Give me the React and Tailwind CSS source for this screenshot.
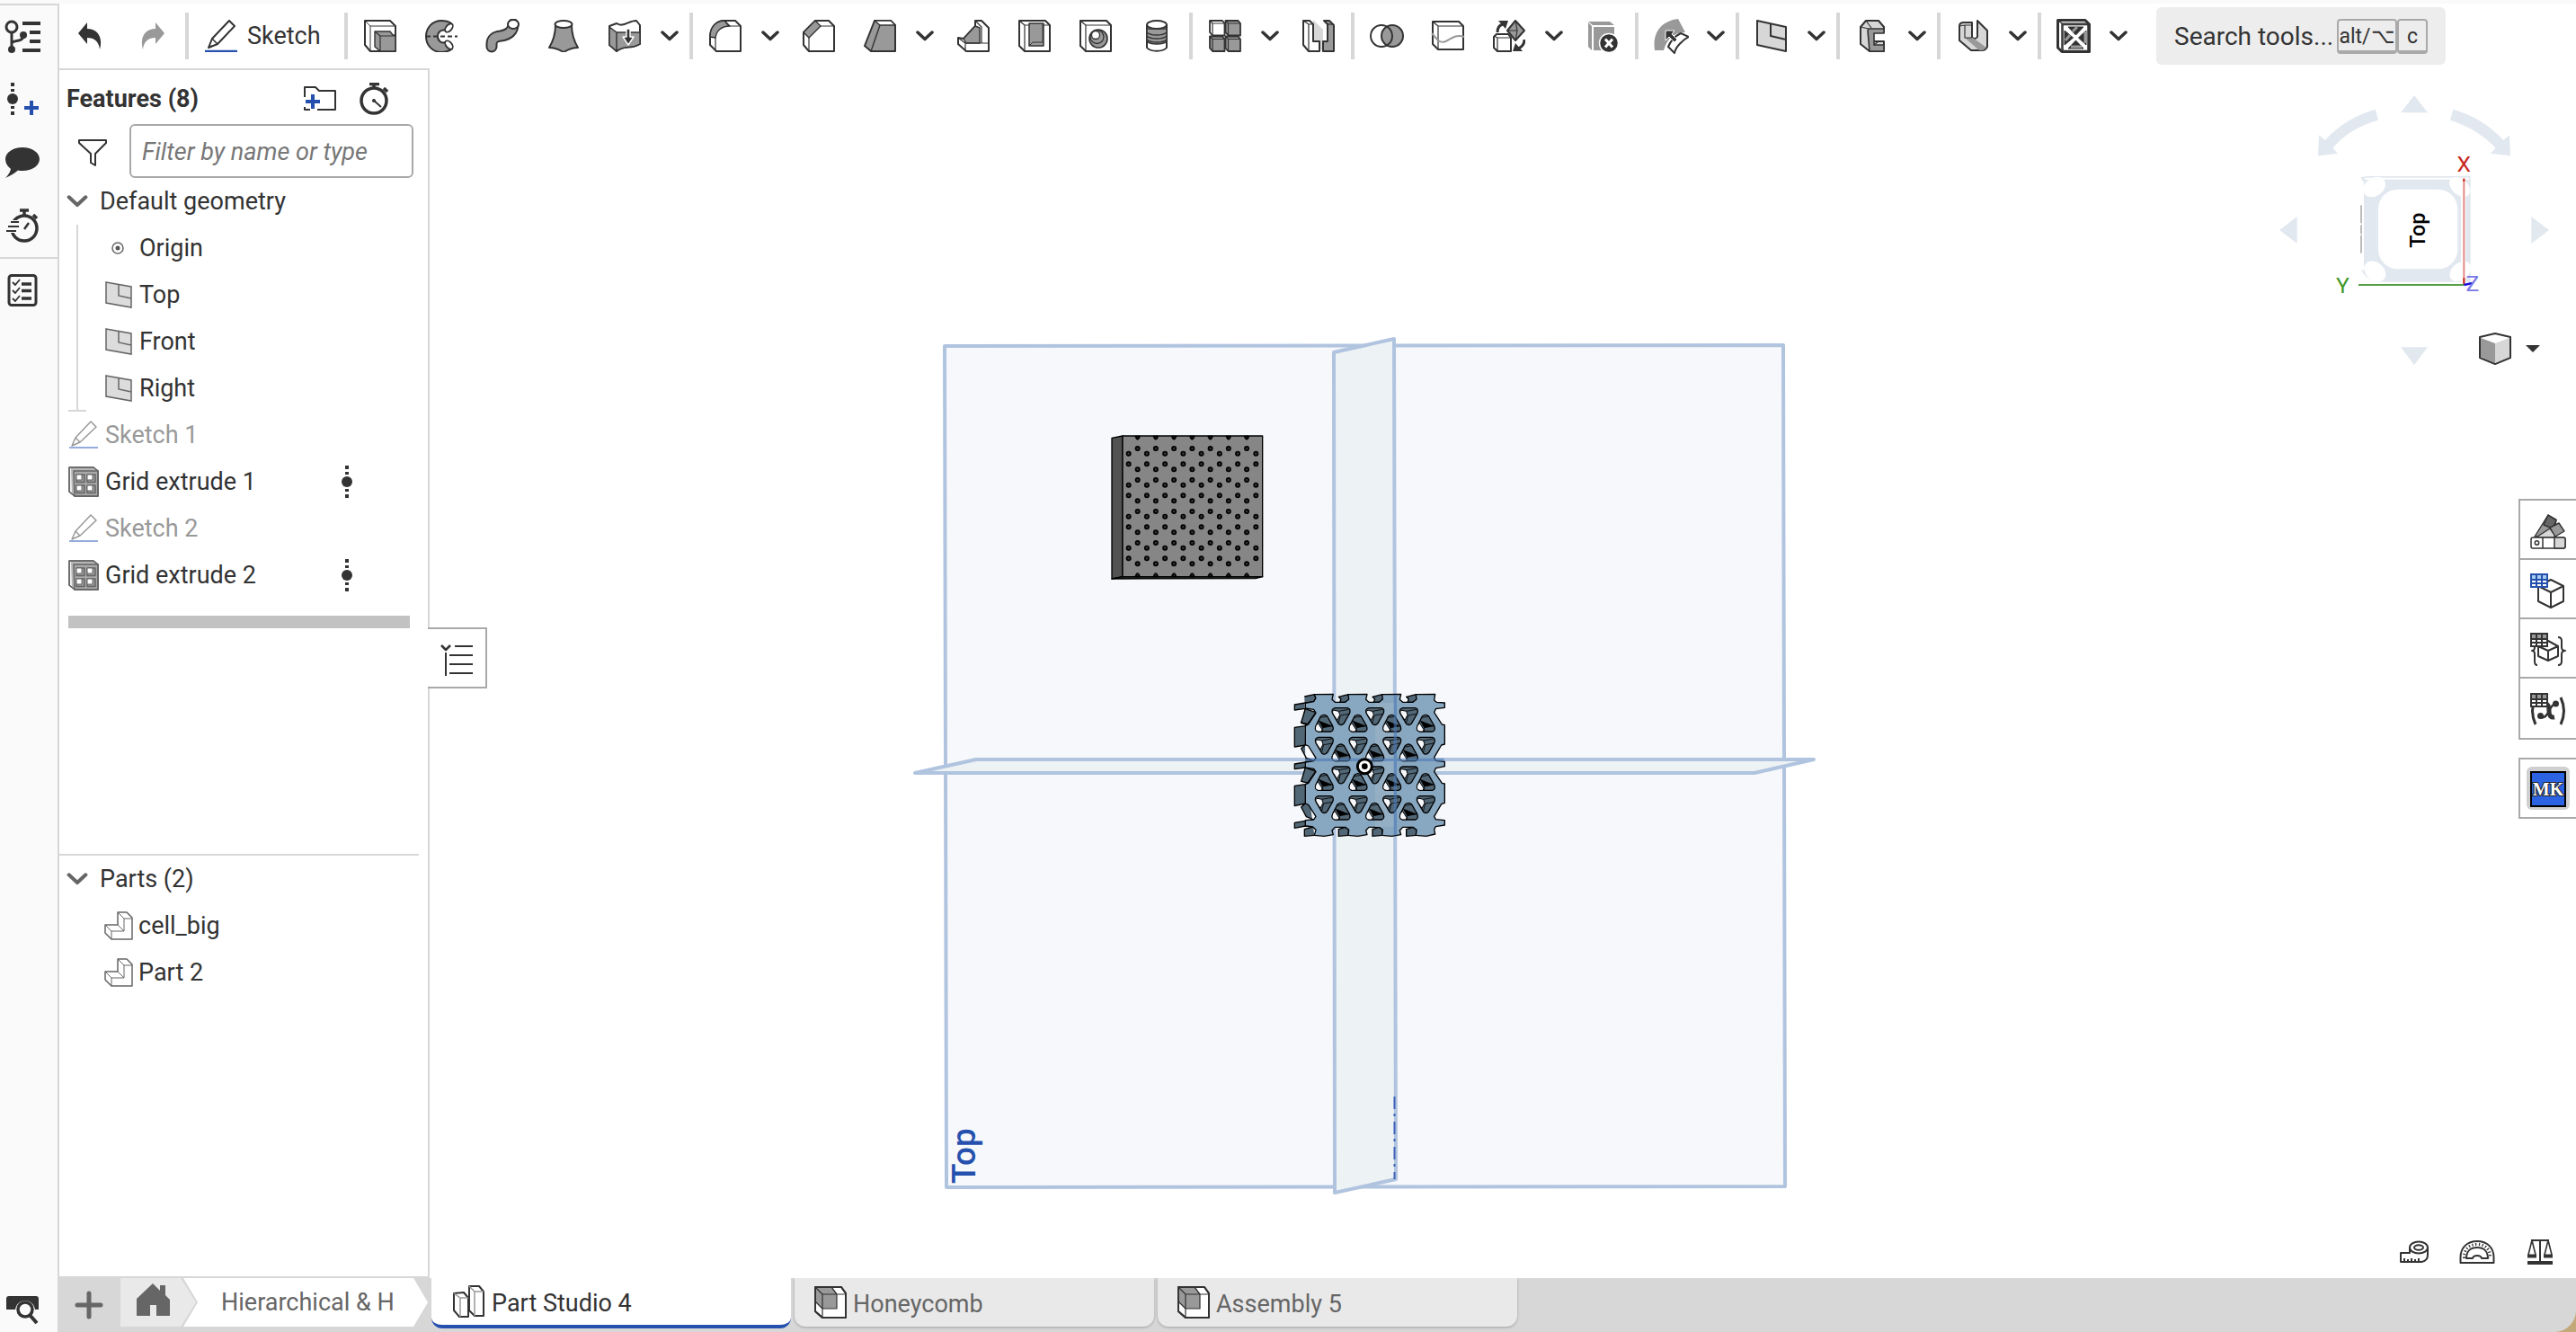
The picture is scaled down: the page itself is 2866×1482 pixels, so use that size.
import React from "react";

const INK = "#333333";
const MID = "#999999";

function Icon({ w = 36, h = 36, children, className = "" }) {
  return (
    <svg
      width={w}
      height={h}
      viewBox={`0 0 ${w} ${h}`}
      fill="none"
      stroke={INK}
      strokeWidth="2"
      strokeLinejoin="round"
      aria-hidden="true"
      className={`shrink-0 ${className}`}
    >
      {children}
    </svg>
  );
}

/* ---------- toolbar icons ---------- */

const Undo = () => (
  <Icon w={28} h={32}>
    <path d="M1 13 11 1V8C22 8 29 17 25 31 24 22 19 18 11 18V25Z" fill={INK} stroke="none" />
  </Icon>
);
const Redo = () => (
  <Icon w={28} h={32}>
    <path d="M27 13 17 1V8C6 8-1 17 3 31 4 22 9 18 17 18V25Z" fill={MID} stroke="none" />
  </Icon>
);
const Pencil = () => (
  <Icon>
    <path d="M27 1 33 7 14 27 4 31 8 21Z" fill="#fff" />
    <path d="M8 21 14 27M4 31 8 29" strokeWidth="1.6" />
    <path d="M0 35H36" stroke="#2650ae" strokeWidth="2.4" />
  </Icon>
);
const Extrude = () => (
  <Icon>
    <path d="M1 1H29L35 7V35H7L1 28Z" fill="#fff" />
    <path d="M1 1 7 7H35M7 7V35" strokeWidth="1" />
    <path d="M12 13H29L32 17H35V35H18L12 30Z" fill={MID} strokeWidth="1.4" />
    <path d="M12 13 18 18H35M18 18V35" strokeWidth="1.2" />
  </Icon>
);
const Revolve = () => (
  <Icon>
    <path d="M29 4C25 1 21 1 18 1 8 1 1 9 1 18.500S8 36 18 36C22 36 27 35 30 32L23 25C18 27 14 23 14 18.500S18 10 23 12Z" fill={MID} />
    <ellipse cx="26.500" cy="9" rx="3.200" ry="5.500" fill="#fff" strokeWidth="1.800" transform="rotate(40 26.500 9)" />
    <ellipse cx="26.500" cy="28" rx="3.200" ry="5.500" fill="#fff" strokeWidth="1.800" transform="rotate(-40 26.500 28)" />
    <path d="M1 18.500H36" strokeDasharray="5 3" />
  </Icon>
);
const Sweep = () => (
  <Icon w={38} h={38}>
    <path d="M7 31V28Q7 20 17 19 30 17 31 7V6" strokeWidth="13" strokeLinecap="round" />
    <path d="M7 31V28Q7 20 17 19 30 17 31 7V6" strokeWidth="9" stroke={MID} strokeLinecap="round" />
    <ellipse cx="31" cy="6" rx="6" ry="5" fill="#fff" />
  </Icon>
);
const Loft = () => (
  <Icon>
    <path d="M9 6C9 16 5 26 2 31 8 31 13 33 18 36 23 33 28 31 34 31 31 26 27 16 27 6Z" fill={MID} />
    <ellipse cx="18" cy="5" rx="9.500" ry="4" fill="#fff" />
  </Icon>
);
const Thicken = () => (
  <Icon>
    <path d="M1 7V28L9 35C18 27 24 34 35 27V6L31 1C22 1 16 9 9 4Z" fill="#fff" />
    <path d="M1 8 9 14V35L1 28ZM9 14H35V27C24 33 18 28 9 35Z" fill={MID} strokeWidth="1.400" />
    <path d="M20 10H24V19H28L22 28 16 19H20Z" fill={INK} stroke="#fff" strokeWidth="1.400" />
  </Icon>
);
const Fillet = () => (
  <Icon>
    <path d="M1 19C1 8 8 1 17 1H29L35 7V35H8L1 28Z" fill="#fff" />
    <path d="M1 19C1 8 8 1 17 1L23 7C14 7 8 12 7 20Z" fill={MID} strokeWidth="1.400" />
    <path d="M17 1 22 7H35M7 20V34" strokeWidth="1.200" />
  </Icon>
);
const Chamfer = () => (
  <Icon>
    <path d="M1 14 14 1H29L35 7V35H7L1 28Z" fill="#fff" />
    <path d="M1 14 14 1 20 7 7 20Z" fill={MID} strokeWidth="1.400" />
    <path d="M20 7H35M7 20V34" strokeWidth="1.200" />
  </Icon>
);
const Draft = () => (
  <Icon>
    <path d="M12 1H30L35 6V35H8L1 29Z" fill={MID} />
    <path d="M12 1H30L35 6H18Z" fill="#fff" strokeWidth="1.400" />
    <path d="M18 6 8 35" strokeWidth="1.400" />
  </Icon>
);
const Rib = () => (
  <Icon>
    <path d="M20 1H27L35 9V35H10L1 27V20L7 21 20 7Z" fill="#fff" />
    <path d="M7 21 20 7 25 9V26H10Z" fill={MID} strokeWidth="1.400" />
    <path d="M20 1 27 8 27 26M1 20 9 26V34M9 26H35" strokeWidth="1.200" />
  </Icon>
);
const Shell = () => (
  <Icon>
    <path d="M1 1H30L35 6V35H7L1 29Z" fill="#fff" />
    <path d="M1 1 7 6H35M7 6V35" strokeWidth="1.200" />
    <path d="M12 4H28V29H12Z" fill={MID} strokeWidth="1.500" />
    <path d="M12 29 16 25H27M27 25V5" strokeWidth="1" />
  </Icon>
);
const Hole = () => (
  <Icon>
    <path d="M1 1H30L35 6V35H7L1 29Z" fill="#fff" />
    <path d="M1 1 7 6H35M7 6V35" strokeWidth="1.200" />
    <circle cx="21" cy="21" r="10" fill={MID} strokeWidth="1.600" />
    <circle cx="19.500" cy="19" r="7.500" fill={MID} strokeWidth="1.300" />
    <circle cx="18" cy="17" r="4.500" fill="#fff" strokeWidth="1.300" />
  </Icon>
);
const Thread = () => (
  <Icon w={26}>
    <path d="M2 6V31C6 36 20 36 24 31V6Z" fill="#fff" />
    <path d="M2 10V24C6 28 20 28 24 24V10Z" fill={MID} strokeWidth="1.400" />
    <path d="M2 14C6 18 20 18 24 14M2 18C6 22 20 22 24 18M2 22C6 26 20 26 24 22" strokeWidth="1.300" />
    <ellipse cx="13" cy="5.500" rx="11" ry="4.500" fill="#fff" />
  </Icon>
);
const Pattern = () => (
  <Icon>
    {[[1, 1, "#fff"], [18.500, 1, MID], [1, 18.500, MID], [18.500, 18.500, MID]].map(([x, y, f]) => (
      <g key={`${x}-${y}`} transform={`translate(${x} ${y})`}>
        <path d="M0 0H14L16.500 3V16.500H3L0 13Z" fill={f} strokeWidth="1.800" />
        <path d="M0 0 3 3H16.500M3 3V16.500" strokeWidth="1.200" />
      </g>
    ))}
  </Icon>
);
const Mirror = () => (
  <Icon>
    <path d="M12 0 23 11V36L12 25Z" fill="#d7d7d7" stroke="none" />
    <path d="M1 1H8L12 5V24H19V35H7L1 28Z" fill="#fff" />
    <path d="M1 1 7 5H12M7 5V35" strokeWidth="1.200" />
    <path d="M24 1H30L35 6V35H23V24H28V5Z" fill={MID} />
    <path d="M28 5H35" strokeWidth="1.200" />
  </Icon>
);
const Boolean = () => (
  <Icon w={38}>
    <circle cx="13" cy="18" r="12" fill="#fff" />
    <circle cx="25" cy="18" r="12" fill={MID} />
    <path d="M19 7.600A12 12 0 0 1 19 28.400" />
  </Icon>
);
const Split = () => (
  <Icon w={38}>
    <path d="M2 2H31L36 7V33H8L2 27Z" fill="#fff" />
    <path d="M2 2 8 7H36M8 7V33" strokeWidth="1.200" />
    <path d="M1 15 8 23C18 30 22 14 37 19" stroke={MID} />
  </Icon>
);
const Transform = () => (
  <Icon>
    <path d="M1 19 4 16H17L20 20V35H5L1 31Z" fill="#fff" />
    <path d="M1 18 5 20H20M5 20V35" strokeWidth="1.200" />
    <path d="M25 1 35 12 25 23 16 12Z" fill={MID} />
    <path d="M25 1 27 12 25 23M16 12 27 12" strokeWidth="1.200" />
    <path d="M5 14C5 9 7 6 11 5M35 22C35 27 33 30 28 32" strokeWidth="3" />
    <path d="M6 1H17L14 10ZM33 35H22L25 26Z" fill={INK} stroke="none" />
  </Icon>
);
const DeletePart = () => (
  <Icon>
    <path d="M2 2H26L31 6H7ZM2 3 6 7V34L2 30ZM8 8H31V34H8Z" fill={MID} stroke="none" />
    <circle cx="25" cy="26" r="10.500" fill={INK} stroke="#fff" strokeWidth="1.500" />
    <path d="M21 21.500 29 30.500M29 21.500 21 30.500" stroke="#fff" strokeWidth="3" />
  </Icon>
);
const ModifyFillet = () => (
  <Icon w={40} h={40}>
    <path d="M2 36C-1 16 10 3 28 1L36 16C24 16 16 22 12 36Z" fill={MID} stroke="none" />
    <path d="M31 17 40 21C34 24 25 32 24 39L17 32C20 25 25 20 31 17Z" fill="#fff" />
    <path d="M14 14H24L21 18 27 24 24 27 18 21 14 25Z" fill={INK} stroke="#fff" strokeWidth="1" />
  </Icon>
);
const Plane = () => (
  <Icon>
    <path d="M2 1 34 8V35L2 28Z" fill="#d7d7d7" />
    <path d="M17 4V18L34 22" />
  </Icon>
);
const Frame = () => (
  <Icon w={30}>
    <path d="M2 8 8 1H22L28 8V14H16V24H28V35H12L2 27Z" fill="#d7d7d7" />
    <path d="M11 10H28V15H17V28H28V35H12L10 12Z" fill={MID} strokeWidth="1.600" />
    <path d="M2 8 11 10M8 1 14 9M17 28 22 24" strokeWidth="1.200" />
  </Icon>
);
const SheetMetal = () => (
  <Icon w={34}>
    <path d="M2 7C2 4 4 3 7 3H16V19Q19 23 22 19V1L33 12V30Q31 34 27 34H15L2 23Z" fill="#d7d7d7" />
    <path d="M8 20H17L32 31 28 34H24Z" fill={MID} stroke="none" />
    <path d="M8 6V20H16M2 7 8 6 16 6" strokeWidth="1.200" />
  </Icon>
);
const GridTool = () => (
  <Icon w={38} h={38}>
    <path d="M1.500 1.500H32L36.500 6V36.500H6L1.500 32Z" fill="#fff" strokeWidth="3" />
    <path d="M1 1 6 5H36M6 5V36" strokeWidth="1.500" />
    <rect x="7" y="6.500" width="28" height="29" fill="#fff" strokeWidth="1.500" />
    <path d="M13 9H30L21.500 18ZM13 33H30L21.500 24Z" fill={INK} strokeWidth="1" />
    <path d="M9 13V29L18.500 21ZM33 13V29L24.500 21Z" fill={INK} strokeWidth="1" />
    <path d="M10 24 15 18M18 14 23 9M32 14V27M16 31H28" stroke={MID} strokeWidth="3" />
    <path d="M10 9 33 33M33 9 10 33" stroke="#fff" strokeWidth="2.500" />
  </Icon>
);

function Chevron({ w = 20, h = 12, color = INK, stroke = 3.5 }) {
  return (
    <svg width={w} height={h} viewBox="0 0 20 12" fill="none" aria-hidden="true" className="shrink-0">
      <path d="M2 2 10 9.500 18 2" stroke={color} strokeWidth={stroke} strokeLinecap="round" strokeLinejoin="round" />
    </svg>
  );
}

const TOOLS = [
  [["Extrude", Extrude], ["Revolve", Revolve], ["Sweep", Sweep], ["Loft", Loft], ["Thicken", Thicken], "v"],
  [["Fillet", Fillet], "v", ["Chamfer", Chamfer], ["Draft", Draft], "v", ["Rib", Rib], ["Shell", Shell], ["Hole", Hole], ["Thread", Thread]],
  [["Pattern", Pattern], "v", ["Mirror", Mirror]],
  [["Boolean", Boolean], ["Split", Split], ["Transform", Transform], "v", ["Delete part", DeletePart]],
  [["Modify fillet", ModifyFillet], "v"],
  [["Plane", Plane], "v"],
  [["Frame", Frame], "v"],
  [["Sheet metal", SheetMetal], "v"],
  [["Grid extrude", GridTool], "v"],
];

const Divider = () => <div className="mx-0.5 h-13 w-1 shrink-0 bg-[#d7d7d7]" />;

function ToolButton({ label, children }) {
  return (
    <button type="button" aria-label={label} className="flex h-15 w-17 shrink-0 items-center justify-center">
      {children}
    </button>
  );
}

function Toolbar() {
  return (
    <header className="flex h-18 shrink-0 items-center bg-white">
      <div className="flex gap-0.5">
        <ToolButton label="Undo"><Undo /></ToolButton>
        <ToolButton label="Redo"><Redo /></ToolButton>
      </div>
      <Divider />
      <button type="button" className="flex h-15 w-[169px] shrink-0 items-center gap-[11px] pl-4">
        <Pencil />
        Sketch
      </button>
      {TOOLS.map((group, g) => (
        <div key={g} className="flex shrink-0 items-center">
          <Divider />
          {group.map((item, i) =>
            item === "v" ? (
              <button key={i} type="button" aria-label="More tools" className="flex h-15 w-9 items-center justify-center pr-1">
                <Chevron />
              </button>
            ) : (
              <ToolButton key={i} label={item[0]}>{React.createElement(item[1])}</ToolButton>
            )
          )}
        </div>
      ))}
      <button type="button" className="ml-5.5 flex h-16 w-[322px] shrink-0 items-center rounded-md bg-[#ededed] pl-5 text-[28px]">
        <span className="w-[181px] pt-0.5 text-left">Search tools...</span>
        <kbd className="h-[39px] w-[67px] rounded border-2 border-b-4 border-[#a9a9a9] text-center font-[Roboto] text-[23px] leading-9">alt/⌥</kbd>
        <kbd className="h-[39px] w-[34px] rounded border-2 border-b-4 border-[#a9a9a9] text-center font-[Roboto] text-[23px] leading-9">c</kbd>
      </button>
    </header>
  );
}

/* ---------- left rail ---------- */

const RailTree = () => (
  <Icon w={40} h={38}>
    <circle cx="8" cy="8" r="6" strokeWidth="3" />
    <path d="M8 14V31M8 26Q9 24 16 23 21 22 21 17" strokeWidth="3" />
    <circle cx="8" cy="33" r="4" fill={INK} stroke="none" />
    <circle cx="21" cy="17" r="4" fill={INK} stroke="none" />
    <path d="M20 4H40M28 14H40M28 24H40M20 34H40" strokeWidth="4" />
  </Icon>
);
const DotsStack = () => (
  <>
    <circle cx="6" cy="18" r="6" fill={INK} stroke="none" />
    <path d="M6 0V4M6 7V10M6 26V29M6 32V36" strokeWidth="4" />
  </>
);
const RailInsert = () => (
  <Icon w={36} h={38}>
    <g transform="translate(1 0)"><DotsStack /></g>
    <path d="M20 28H36M28 20V36" stroke="#2650ae" strokeWidth="4" />
  </Icon>
);
const RailChat = () => (
  <Icon w={40} h={34}>
    <path d="M20 0C31 0 39 6 39 13S31 26 20 26Q17 26 15 25.500 10 30 1 34 6 29 7 24C3 21 1 17 1 13 1 6 9 0 20 0Z" fill={INK} stroke="none" />
  </Icon>
);
const RailClock = () => (
  <Icon w={36} h={38}>
    <circle cx="20" cy="22" r="14" strokeWidth="3.500" />
    <path d="M15 2H25M20 2V8M30 7 34 11" strokeWidth="3.500" />
    <path d="M25 16 20 23" strokeWidth="2.500" />
    <path d="M2 13H16V27H-2Z" fill="#fafafa" stroke="none" />
    <path d="M5 15H14M2 20H14M0 25H11" />
  </Icon>
);
const RailChecklist = () => (
  <Icon>
    <rect x="3" y="1.500" width="30" height="33" rx="3" strokeWidth="3" />
    <path d="M7 9 10 12 15 6M7 18 10 21 15 15M7 27 10 30 15 24" strokeWidth="1.800" />
    <path d="M17 11H28M17 18.500H28M17 27H28" strokeWidth="3.500" />
  </Icon>
);
const RailSearch = () => (
  <Icon w={38} h={32}>
    <path d="M1 16V4Q1 1 4 1H34Q37 1 37 4V16H33C31 3 13 3 11 16Z" fill={INK} stroke="none" />
    <circle cx="22" cy="16" r="8" fill="#fafafa" strokeWidth="3.500" />
    <path d="M27 22 35 31" strokeWidth="4" />
  </Icon>
);

function RailButton({ label, children }) {
  return (
    <button type="button" aria-label={label} className="flex h-[70px] w-[50px] shrink-0 items-center justify-center">
      {children}
    </button>
  );
}

function Rail() {
  return (
    <nav aria-label="Panels" className="flex w-[66px] shrink-0 flex-col border-t-2 border-r-2 border-[#d7d7d7] bg-[#fafafa]">
      <RailButton label="Feature list"><RailTree /></RailButton>
      <RailButton label="Insert version"><RailInsert /></RailButton>
      <RailButton label="Comments"><RailChat /></RailButton>
      <RailButton label="History"><RailClock /></RailButton>
      <div className="h-0.5 bg-[#d7d7d7]" />
      <RailButton label="Checklist"><RailChecklist /></RailButton>
      <div className="flex-1" />
      <div className="-mb-2.5"><RailButton label="Search tabs"><RailSearch /></RailButton></div>
    </nav>
  );
}

/* ---------- feature panel ---------- */

const PlaneSmall = () => (
  <svg width="30" height="30" viewBox="0 0 30 30" fill="none" stroke="#666" strokeWidth="1.500" aria-hidden="true">
    <path d="M1 1 29 6V29L1 24Z" fill="#dcdcdc" />
    <path d="M15 4V16L29 19" />
  </svg>
);
const OriginSmall = () => (
  <svg width="30" height="30" viewBox="0 0 30 30" fill="none" stroke="#666" strokeWidth="1.500" aria-hidden="true">
    <circle cx="14" cy="15" r="6" />
    <circle cx="14" cy="15" r="2.500" fill="#555" stroke="none" />
  </svg>
);
const SketchSmall = () => (
  <svg width="34" height="32" viewBox="0 0 34 32" fill="none" stroke="#999" strokeWidth="1.500" strokeLinejoin="round" aria-hidden="true">
    <path d="M25 1 31 7 13 24 4 28 8 19Z" />
    <path d="M8 19 13 24" />
    <path d="M1 30H33" stroke="#8ba3d8" strokeWidth="1.800" />
  </svg>
);
const GridSmall = () => (
  <svg width="34" height="34" viewBox="0 0 34 34" fill="none" stroke="#666" strokeWidth="1.500" strokeLinejoin="round" aria-hidden="true">
    <path d="M1 1H28L33 5V33H7L1 28Z" fill="#f3f3f3" />
    <path d="M3 2H28L33 5V33H7L4 30Z" fill="#b5b5b5" stroke="none" />
    <path d="M6 5H33V33H7Z" fill="#a9a9a9" />
    {[[9, 9], [21, 9], [9, 21], [21, 21]].map(([x, y]) => (
      <g key={`${x}-${y}`}>
        <rect x={x} y={y} width="9" height="8.500" fill="#999" />
        <rect x={x} y={y} width="6" height="6" fill="#fff" strokeWidth="1" />
      </g>
    ))}
    <path d="M1 1H28L33 5V33H7L1 28Z" />
  </svg>
);
const PartSmall = () => (
  <svg width="32" height="32" viewBox="0 0 32 32" fill="none" stroke="#666" strokeWidth="1.500" strokeLinejoin="round" aria-hidden="true">
    <path d="M15 1H25L31 7V31H8L1 24V15H15Z" fill="#fff" />
    <path d="M15 1 22 8V22L15 15M22 8H31M1 15 8 22H22M8 22V31" strokeWidth="1" />
  </svg>
);

function Row({ icon, label, indent = false, muted = false, menu = false }) {
  return (
    <div className={`flex h-13 items-center ${indent ? "pl-[21px]" : "pl-2.5"}`}>
      <span className={`flex shrink-0 items-center ${indent ? "w-[38px]" : "w-[41px]"}`}>{icon}</span>
      <span className={`flex-1 ${muted ? "text-[#999]" : ""}`}>{label}</span>
      {menu && (
        <button type="button" aria-label={`${label} options`} className="mr-21">
          <Icon w={12} h={36}><DotsStack /></Icon>
        </button>
      )}
    </div>
  );
}

function SectionToggle({ label }) {
  return (
    <button type="button" aria-expanded="true" className="flex h-13 items-center gap-[13px] pl-2">
      <Chevron w={24} h={14} color="#666" />
      {label}
    </button>
  );
}

function FeaturePanel() {
  return (
    <aside className="flex w-[412px] shrink-0 flex-col border-y-2 border-r-2 border-[#d7d7d7] bg-white">
      <div className="flex h-15 items-center pt-1 pr-[42px] pl-2">
        <h2 className="flex-1 font-bold">Features (8)</h2>
        <button type="button" aria-label="Add folder" className="mr-[25px]">
          <Icon w={38} h={30}>
            <path d="M2 13V2H14L18 6H36V27H16M8 27H2V24" />
            <path d="M3 18H19M11 10V26" stroke="#2650ae" strokeWidth="4" />
          </Icon>
        </button>
        <button type="button" aria-label="Rebuild times">
          <Icon w={34} h={36}>
            <circle cx="16" cy="20" r="14" strokeWidth="3.500" />
            <path d="M11 1.500H22M16 2V6M27 6 31 10" strokeWidth="3.500" />
            <path d="M15 19 24 27" strokeWidth="2" />
            <circle cx="16" cy="20" r="2" fill={INK} stroke="none" />
          </Icon>
        </button>
      </div>
      <div className="flex h-15 items-center pr-4 pl-[21px]">
        <button type="button" aria-label="Filter options" className="mr-[25px] pt-1">
          <Icon w={32} h={32}>
            <path d="M1 2H31V5L19 17V30L14 27V17L1 5Z" />
          </Icon>
        </button>
        <input
          type="text"
          aria-label="Filter by name or type"
          placeholder="Filter by name or type"
          className="h-15 w-full min-w-0 rounded-md border-2 border-[#a9a9a9] bg-white px-3 pt-0.5 placeholder:text-[#777] placeholder:italic"
        />
      </div>
      <SectionToggle label="Default geometry" />
      <div className="flex">
        <div className="ml-2.5 flex w-5 shrink-0 flex-col items-center">
          <div className="w-0.5 flex-1 bg-[#d7d7d7]" />
          <div className="h-0.5 w-full bg-[#d7d7d7]" />
        </div>
        <div className="flex-1">
          <Row indent icon={<OriginSmall />} label="Origin" />
          <Row indent icon={<PlaneSmall />} label="Top" />
          <Row indent icon={<PlaneSmall />} label="Front" />
          <Row indent icon={<PlaneSmall />} label="Right" />
        </div>
      </div>
      <Row muted icon={<SketchSmall />} label="Sketch 1" />
      <Row menu icon={<GridSmall />} label="Grid extrude 1" />
      <Row muted icon={<SketchSmall />} label="Sketch 2" />
      <Row menu icon={<GridSmall />} label="Grid extrude 2" />
      <div className="mt-[19px] mr-5 ml-2.5 h-3.5 shrink-0 bg-[#c2c2c2]" />
      <div className="flex-1" />
      <div className="mr-2.5 h-[470px] shrink-0 border-t-2 border-[#d7d7d7]">
        <SectionToggle label="Parts (2)" />
        <div className="pl-[29px]">
          <Row indent icon={<PartSmall />} label="cell_big" />
          <Row indent icon={<PartSmall />} label="Part 2" />
        </div>
      </div>
    </aside>
  );
}

/* ---------- 3D view ---------- */

const FACE =
  "M757 938 820 937 816 955 826 964 860 964 872 954 870 938 933 937 929 955 939 964 973 964 985 954 983 938 1046 937 1042 955 1052 964 1086 964 1098 954 1096 938 1160 937 1157 958 1165 964 1192 966V982L1162 986 1157 998 1183 1038 1192 1040V1104L1181 1107 1157 1148 1162 1159 1192 1162V1178L1162 1184 1157 1196 1183 1234 1192 1236V1300L1181 1304 1157 1345 1162 1355 1192 1358V1374L1162 1379 1157 1388 1160 1404 1130 1411 1096 1408 1098 1390 1086 1381 1052 1381 1042 1392 1046 1406 1015 1411 983 1408 985 1390 973 1381 939 1381 929 1392 933 1406 902 1411 870 1408 872 1390 860 1381 826 1381 816 1392 820 1406 790 1411 757 1408 762 1390 752 1380 727 1376V1358L755 1356 762 1345 737 1306 727 1302V1238L737 1234 762 1196 755 1186 727 1182V1164L755 1160 762 1150 737 1110 727 1106V1043L737 1038 762 1000 755 988 727 984V967L755 962 762 950Z";

/* The wall seen past the left edge of the face, one run per lattice cell. */
const WALL =
  "M724 945 757 938 762 950 755 962 727 966 691 972V990L727 985 718 1020 713 1033 730 1038 727 1043 691 1048V1113L727 1107 713 1118 730 1150 755 1160 727 1164 691 1170V1187L727 1182";
const WALL_LOW =
  "M727 1182 762 1196 737 1234 727 1238 691 1243V1310L727 1302 713 1314 730 1346 755 1356 727 1360 691 1366V1384L727 1377 752 1380 724 1388V1411L757 1408";

const range = (n) => Array.from({ length: n }, (_, i) => i);

function UpHole({ x, y }) {
  return (
    <g transform={`translate(${x} ${y})`}>
      <path d="M-12-24Q0-34 10-24L28 8Q34 24 22 27H-20Q-34 24-28 8Z" fill="#526776" />
      <path d="M-21-2-7 20-9 27H-20Q-34 24-28 8Z" fill="#f6f8fb" strokeWidth="3" />
      <path d="M-18-10-5 14 28 8M-5 14V27M-12-20 10-24" strokeWidth="2.500" />
    </g>
  );
}
function DownHole({ x, y }) {
  return (
    <g transform={`translate(${x} ${y})`}>
      <path d="M-20-27H22Q34-24 28-8L10 24Q0 34-8 26L-28-8Q-34-24-20-27Z" fill="#526776" />
      <path d="M-27-8Q-31-18-22-19L-8-16-4-4-13 14Z" fill="#f6f8fb" strokeWidth="3" />
      <path d="M-8-16 26-22M-2-2 28-7M-2-2-8 22" strokeWidth="2.500" />
    </g>
  );
}

function Model() {
  const even = range(7);
  const odd = range(8);
  return (
    <svg viewBox="478 76 2388 1346" className="block h-full w-full" role="img" aria-label="Part studio model">
      <g stroke="#b1c4df" strokeWidth="4" strokeLinejoin="round">
        <path d="M1051 385 1984 384 1986 1320 1053 1321Z" fill="#f6f8fb" />
        <path d="M1484 392 1551 377 1553 1312 1485 1327Z" fill="#edf2f5" />
        <path d="M1018 860 1086 845H2018L1952 860Z" fill="#edf2f5" />
        <path d="M1484 830V880M1551 830V880" />
      </g>
      <path d="M1551.500 1220V1312" stroke="#3e62b8" strokeWidth="2" strokeDasharray="14 5 3 6" />
      <text transform="translate(1085 1317) rotate(-90)" fontSize="37" fontWeight="500" fill="#2650ae" fontFamily="Roboto, sans-serif">Top</text>

      <g transform="translate(1210 460) scale(0.333333)" stroke="#000" strokeWidth="4" strokeLinejoin="round">
        <path d="M81 82 117 75V545L81 552Z" fill="#525252" />
        <path d="M117 75H584V545H117Z" fill="#868686" />
        <path d="M81 552 117 545H584L560 551Z" fill="#222" />
        <g fill="#333" stroke="#000" strokeWidth="5">
          {[117, 187, 222, 292, 327, 397, 432, 502].map((y) =>
            even.map((i) => <circle key={`${y}-${i}`} cx={167 + i * 60.700} cy={y} r="6.500" />)
          )}
          {[134, 169, 239, 274, 344, 379, 449, 484].map((y) =>
            odd.map((i) => <circle key={`${y}-${i}`} cx={137 + i * 60.700} cy={y} r="6.500" />)
          )}
          {even.map((i) => (
            <path key={i} d={`M${160 + i * 60.700} 77q7 18 14 0zM${160 + i * 60.700} 544q7-20 14 0z`} />
          ))}
        </g>

        <path d={WALL} fill="#526776" />
        <path d={WALL_LOW} fill="#526776" />
        {[1010, 1206].map((y) => (
          <path key={y} d={`M727 ${y - 24} 762 ${y - 12} 735 ${y + 27} 713 ${y + 22}Z`} fill="#526776" />
        ))}
        {range(3).map((i) => (
          <g key={i} transform={`translate(${i * 113} 0)`} fill="#526776">
            <path d="M838 946 870 938 876 954 860 964H842L846 954Z" />
            <path d="M838 1388 860 1381 872 1390 870 1408 838 1411Z" />
          </g>
        ))}
        <path d={FACE} fill="#88a7c0" />
        <path d="M960 966H1024V1380H960Z" fill="#94afc4" stroke="none" />
        {[1035, 1231].map((y) => range(4).map((i) => <UpHole key={`${y}-${i}`} x={790 + i * 113} y={y} />))}
        {[1133, 1329].map((y) => range(3).map((i) => <UpHole key={`${y}-${i}`} x={846 + i * 113} y={y} />))}
        {[1010, 1206].map((y) => range(3).map((i) => <DownHole key={`${y}-${i}`} x={846 + i * 113} y={y} />))}
        {[1108, 1304].map((y) => range(4).map((i) => <DownHole key={`${y}-${i}`} x={790 + i * 113} y={y} />))}
        <path d="M1027 940V1408M730 1156H1190" stroke="#4a78b8" strokeOpacity="0.600" strokeWidth="10" />
        <circle cx="925" cy="1178" r="24" fill="#fff" strokeWidth="9" />
        <circle cx="925" cy="1178" r="10" fill="#000" stroke="none" />
      </g>
    </svg>
  );
}

function ViewCube() {
  return (
    <svg width="366" height="340" viewBox="0 0 1098 1020" role="img" aria-label="View orientation: Top" className="absolute top-3.5 right-0">
      <g fill="#e2e8ef">
        <path d="M558 48 603 106H513ZM558 948 603 889H513ZM108 498 167 453V543ZM1008 498 949 453V543Z" />
        <path d="M429 95 438 131Q340 158 286 224L303 242 237 250 240 181 260 198Q330 122 429 95Z" />
        <path d="M688 95 678 131Q770 160 830 224L813 242 879 250 876 181 856 198Q786 122 688 95Z" />
        <path d="M380 323Q388 317 410 318H746V671H440Q400 668 380 630L390 632V340Z" />
      </g>
      <path d="M392 326H742" stroke="#fff" strokeWidth="6" />
      <rect x="438" y="362" width="265" height="266" rx="66" fill="#fff" />
      <g fill="#fff">
        <ellipse cx="425" cy="354" rx="40" ry="30" transform="rotate(-35 425 354)" />
        <ellipse cx="710" cy="354" rx="40" ry="26" transform="rotate(40 710 354)" />
        <ellipse cx="427" cy="636" rx="40" ry="30" transform="rotate(40 427 636)" />
        <ellipse cx="712" cy="636" rx="40" ry="28" transform="rotate(-40 712 636)" />
        <path d="M714 326H730V672H714Z" />
      </g>
      <path d="M381 415V575" stroke="#777" strokeWidth="3" strokeDasharray="60 6 30 4" />
      <path d="M724 326V676" stroke="#e08a86" strokeWidth="6" />
      <path d="M724 326V336M724 658V680" stroke="#c9271e" strokeWidth="6" />
      <path d="M372 681H724" stroke="#57a046" strokeWidth="6" />
      <path d="M724 681 752 675" stroke="#1c12d8" strokeWidth="7" />
      <g fontFamily="Roboto, sans-serif" fontSize="74">
        <text x="724" y="303" textAnchor="middle" fill="#c9271e">X</text>
        <text x="319" y="708" textAnchor="middle" fill="#3f9a28">Y</text>
        <text x="753" y="701" textAnchor="middle" fill="#7a78e6">Z</text>
        <text transform="translate(593 557) rotate(-90)" fontSize="70" fontWeight="500" fill="#000">Top</text>
      </g>
    </svg>
  );
}

const Appearance = () => (
  <Icon w={40} h={40}>
    <path d="M5 25 20 1 29 6 28 12 10 25Z" fill={MID} strokeWidth="1.400" />
    <path d="M20 1 29 7 25 16 15 12Z" fill="#666" strokeWidth="1.400" />
    <path d="M8 25 22 16 28 24 26 26H10Z" fill="#d7d7d7" strokeWidth="1.400" />
    <path d="M22 15 32 10 38 19 28 25Z" fill={MID} strokeWidth="1.400" />
    <rect x="1" y="26" width="38" height="12" rx="2" fill="#fff" strokeWidth="1.500" />
    <path d="M27 26H37Q39 26 39 28V36Q39 38 37 38H27Z" fill="#d7d7d7" strokeWidth="1.500" />
    <path d="M14 26V38" strokeWidth="1.500" />
    <circle cx="7.500" cy="32" r="2.200" strokeWidth="1.500" />
  </Icon>
);
function MiniTable({ color, head }) {
  return (
    <g stroke="none">
      <rect x="0" y="0" width="20" height="16" fill={color} />
      {[2, 8, 14].map((x) => (
        <g key={x}>
          <rect x={x} y="2" width="4" height="4" fill={head} />
          <rect x={x} y="8" width="4" height="2" fill="#fff" />
          <rect x={x} y="12" width="4" height="2" fill="#fff" />
        </g>
      ))}
    </g>
  );
}
const ConfigTable = () => (
  <Icon w={40} h={40}>
    <path d="M9 14 23 7 37 14V31L23 38 9 31ZM9 14 23 21 37 14M23 21V38" />
    <MiniTable color="#2650ae" head="#a9cdf0" />
  </Icon>
);
const ConfigVars = () => (
  <Icon w={40} h={40}>
    <path d="M9 15 20 9 31 15V26L20 31 9 26ZM9 15 20 20 31 15M20 20V31" />
    <path d="M8 36Q5 36 5 32V24Q5 20 2 20 5 20 5 16M31 5Q35 5 35 9V16Q35 20 39 20 35 20 35 24V32Q35 36 31 36" />
    <MiniTable color={INK} head={MID} />
  </Icon>
);
const VariableTable = () => (
  <Icon w={40} h={40}>
    <path d="M6 5Q-1 20 6 35M34 5Q41 20 34 35" strokeWidth="3" />
    <path d="M17 12Q21 12 21 20T27 27" strokeWidth="5" />
    <path d="M30 12Q25 11 21 20T11 27" strokeWidth="2.500" />
    <circle cx="28.500" cy="12" r="3.500" fill={INK} stroke="none" />
    <circle cx="11.500" cy="25.500" r="3.500" fill={INK} stroke="none" />
    <MiniTable color={INK} head={MID} />
  </Icon>
);

function SideTabs() {
  const tabs = [["Appearances", Appearance], ["Configurations", ConfigTable], ["Configuration variables", ConfigVars], ["Variable table", VariableTable]];
  return (
    <div className="absolute top-[479px] right-0 flex w-16 flex-col gap-5">
      <div className="flex flex-col divide-y-2 divide-[#a9a9a9] border-y-2 border-l-2 border-[#a9a9a9] bg-white">
        {tabs.map(([label, Glyph]) => (
          <button key={label} type="button" aria-label={label} className="flex h-[66px] items-center justify-center pt-1.5">
            <Glyph />
          </button>
        ))}
      </div>
      <button type="button" aria-label="MK app" className="flex h-17 items-center justify-center border-y-2 border-l-2 border-[#a9a9a9] bg-white">
        <svg width="48" height="48" viewBox="0 0 48 48" aria-hidden="true">
          <rect width="48" height="48" rx="6" fill="#d0d0d0" />
          <rect x="5" y="6" width="38" height="38" fill="#2b63e3" stroke="#000" strokeWidth="2" />
          <text x="24" y="32" textAnchor="middle" fontFamily="Liberation Serif, serif" fontWeight="700" fontSize="20" fill="#fff" stroke="#222" strokeWidth="2" paintOrder="stroke">MK</text>
        </svg>
      </button>
    </div>
  );
}

function Measurements() {
  return (
    <div className="absolute right-[26px] bottom-[15px] flex items-center">
      <button type="button" aria-label="Measure" className="mr-[34px]">
        <Icon w={32} h={26}>
          <ellipse cx="21" cy="8" rx="10" ry="6.500" />
          <ellipse cx="21" cy="8" rx="5" ry="2.800" />
          <path d="M11 8V14H1V24H24Q31 23 31 16V8M5 24V20M9 24V21M13 24V20M17 24V21M21 24V20" />
        </Icon>
      </button>
      <button type="button" aria-label="Angle" className="mr-9">
        <Icon w={40} h={28}>
          <path d="M1.500 26V20C1.500 9 9 2 20 2S38.500 9 38.500 20V26Z" />
          <path d="M8 21C8 13 13 9 20 9S32 13 32 21H25C24 17 16 17 15 21Z" />
          <path d="M5.500 21C5 11 11 5.500 20 5.500S35 11 34.500 21" strokeWidth="3" strokeDasharray="1.300 2.400" />
        </Icon>
      </button>
      <button type="button" aria-label="Mass properties">
        <Icon w={28} h={28}>
          <path d="M4 1H24M14 1V24" />
          <path d="M5 1 1 17M5 1 9 17M23 1 19 17M23 1 27 17" strokeWidth="1.600" />
          <path d="M0 18.500H10M18 18.500H28M0 26H28" strokeWidth="4" />
        </Icon>
      </button>
    </div>
  );
}

function Viewport() {
  return (
    <main className="relative min-w-0 flex-1 bg-white">
      <div className="h-full w-full"><Model /></div>
      <ViewCube />
      <button type="button" aria-label="View options" className="absolute top-[294px] right-10 flex items-center gap-4">
        <Icon>
          <path d="M1 5 18 1 35 5V28L18 35 1 28Z" fill="#fff" />
          <path d="M2 6 18 12V34L2 27Z" fill={MID} stroke="none" />
          <path d="M18 12 34 6V27L18 34Z" fill="#d7d7d7" stroke="none" />
        </Icon>
        <svg width="16" height="8" viewBox="0 0 16 8" aria-hidden="true"><path d="M0 0H16L8 8Z" fill={INK} /></svg>
      </button>
      <button type="button" aria-label="Toggle feature list" className="absolute top-[622px] -left-0.5 flex h-17 w-[66px] items-center justify-center border-y-2 border-r-2 border-[#a9a9a9] bg-white pt-1.5">
        <Icon w={38} h={38}>
          <path d="M2 2 7 7 12 2" strokeWidth="2.500" />
          <path d="M17 3H37M7 10V36M11 13H37M11 23H37M11 33H37" />
        </Icon>
      </button>
      <SideTabs />
      <Measurements />
    </main>
  );
}

/* ---------- document tabs ---------- */

const StudioIcon = () => (
  <Icon>
    <path d="M1 9 12 8 17 14V35H7L1 28Z" fill="#fff" />
    <path d="M1 9 8 14H17M8 14V35" stroke={MID} strokeWidth="1.500" />
    <path d="M18 1H29L34 7V34H24L18 28Z" fill="#fff" />
    <path d="M18 1 24 7H34M24 7V34" stroke={MID} strokeWidth="1.500" />
  </Icon>
);
const AssemblyIcon = () => (
  <Icon>
    <path d="M1 1H30L35 8V35H9L1 28Z" fill="#fff" />
    <path d="M1 1H19L25 9V25H9L1 17Z" fill={MID} strokeWidth="1.200" />
    <path d="M1 1 9 9H35M9 9V35M19 1 25 9" strokeWidth="1.200" />
    <path d="M1 1H30L35 8V35H9L1 28Z" />
  </Icon>
);

function DocTab({ icon, label, active = false }) {
  return (
    <a
      href="#"
      aria-current={active ? "page" : undefined}
      className={`flex w-[400px] items-center gap-[7px] rounded-b-xl ${
        active
          ? "h-14 border-b-4 border-[#2650ae] bg-white pl-6"
          : "h-[54px] bg-[#e9e9e9] pl-[22px] text-[#666] shadow-[0_1px_3px_rgba(0,0,0,0.25)]"
      }`}
    >
      {icon}
      <span className="pt-1">{label}</span>
    </a>
  );
}

function TabBar() {
  return (
    <footer className="flex h-15 shrink-0 items-start rounded-br-3xl bg-[#d7d7d7]">
      <button type="button" aria-label="Add tab" className="flex h-14 w-[66px] items-center justify-center pt-1">
        <svg width="32" height="32" viewBox="0 0 32 32" aria-hidden="true">
          <path d="M3 16H29M16 3V29" stroke="#666" strokeWidth="5" strokeLinecap="round" />
        </svg>
      </button>
      <button type="button" aria-label="Home" className="ml-0.5 flex h-[54px] w-[84px] items-start bg-[#e9e9e9] pt-1.5 pl-[18px] [clip-path:polygon(0_0,calc(100%-17px)_0,100%_50%,calc(100%-17px)_100%,0_100%)]">
        <svg width="38" height="36" viewBox="0 0 38 36" aria-hidden="true">
          <path d="M0 17 18 0 26 8V2H32V13L37 18V36H22V24H15V36H0Z" fill="#666" />
        </svg>
      </button>
      <a
        href="#"
        className="-ml-3.5 flex h-[54px] w-[272px] items-center bg-white pl-[42px] text-[#666] [clip-path:polygon(0_0,calc(100%-16px)_0,100%_50%,calc(100%-16px)_100%,0_100%,16px_50%)]"
      >
        <span className="w-[191px] overflow-hidden whitespace-nowrap">Hierarchical &amp; H</span>
      </a>
      <nav aria-label="Document tabs" className="ml-1 flex items-start gap-1">
        <DocTab active icon={<StudioIcon />} label="Part Studio 4" />
        <DocTab icon={<AssemblyIcon />} label="Honeycomb" />
        <DocTab icon={<AssemblyIcon />} label="Assembly 5" />
      </nav>
    </footer>
  );
}

export default function App() {
  return (
    <div className="flex h-screen flex-col overflow-hidden bg-[#c3a878] font-[Roboto,sans-serif] text-[27px] leading-8 text-[#333]">
      <div className="h-1 shrink-0 bg-[#fafafa]" />
      <div className="flex min-h-0 flex-1">
        <Rail />
        <div className="flex min-w-0 flex-1 flex-col">
          <Toolbar />
          <div className="flex min-h-0 flex-1">
            <FeaturePanel />
            <Viewport />
          </div>
          <TabBar />
        </div>
      </div>
    </div>
  );
}
